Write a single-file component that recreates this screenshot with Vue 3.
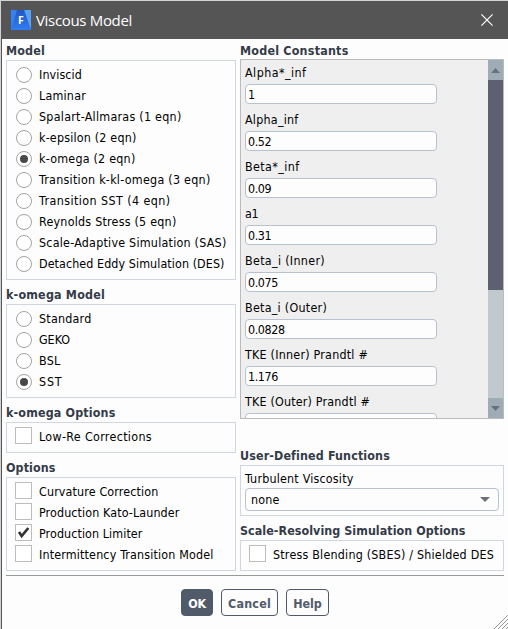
<script setup>
import { ref } from 'vue'

// Spreads a label's characters so that it takes up the given width in pixels.
const vFit = {
  mounted(el, { value }) {
    if (!value) return
    const range = document.createRange()
    range.selectNodeContents(el)
    const natural = range.getBoundingClientRect().width
    el.style.letterSpacing = `${(value - natural) / el.textContent.length}px`
  },
}

const models = [
  { label: 'Inviscid', width: 43 },
  { label: 'Laminar', width: 47 },
  { label: 'Spalart-Allmaras (1 eqn)', width: 142.5 },
  { label: 'k-epsilon (2 eqn)', width: 97.5 },
  { label: 'k-omega (2 eqn)', width: 96.5 },
  { label: 'Transition k-kl-omega (3 eqn)', width: 171.5 },
  { label: 'Transition SST (4 eqn)', width: 131.5 },
  { label: 'Reynolds Stress (5 eqn)', width: 137.5 },
  { label: 'Scale-Adaptive Simulation (SAS)', width: 187.5 },
  { label: 'Detached Eddy Simulation (DES)', width: 185.5 },
]
const model = ref('k-omega (2 eqn)')
const variants = [
  { label: 'Standard', width: 52.5 },
  { label: 'GEKO', width: 31 },
  { label: 'BSL', width: 21.5 },
  { label: 'SST', width: 23.5 },
]
const variant = ref('SST')
const lowRe = ref(false)
const sbes = ref(false)
const options = ref([
  { label: 'Curvature Correction', width: 119.5, on: false },
  { label: 'Production Kato-Launder', width: 140.5, on: false },
  { label: 'Production Limiter', width: 103.5, on: true },
  { label: 'Intermittency Transition Model', width: 174.5, on: false },
])
const constants = ref([
  { label: 'Alpha*_inf', width: 61.5, value: '1' },
  { label: 'Alpha_inf', width: 53.5, value: '0.52' },
  { label: 'Beta*_inf', width: 54.5, value: '0.09' },
  { label: 'a1', width: 13.5, value: '0.31' },
  { label: 'Beta_i (Inner)', width: 80, value: '0.075' },
  { label: 'Beta_i (Outer)', width: 82, value: '0.0828' },
  { label: 'TKE (Inner) Prandtl #', width: 123, value: '1.176' },
  { label: 'TKE (Outer) Prandtl #', width: 125, value: '1' },
])
</script>

<template>
  <div class="window">
    <header class="titlebar">
      <svg class="logo" width="20" height="20" viewBox="0 0 20 20">
        <defs>
          <linearGradient id="logoFill" x1="0" y1="0" x2="0" y2="1">
            <stop offset="0" stop-color="#2456bd" />
            <stop offset="1" stop-color="#2f7df3" />
          </linearGradient>
        </defs>
        <rect width="20" height="20" fill="#3482f2" />
        <path d="M13 0H20V20Z" fill="#58a3fa" />
        <path d="M6 0H13L20 20H0Z" fill="url(#logoFill)" />
        <text x="10" y="14" text-anchor="middle" class="logo-letter">F</text>
      </svg>
      <h1><span v-fit="96">Viscous Model</span></h1>
      <svg class="close" width="12" height="12" viewBox="0 0 12 12">
        <path d="M.4 .4 11.6 11.6M11.6 .4 .4 11.6" stroke="#fff" stroke-width="1.2" />
      </svg>
    </header>

    <main class="columns">
      <div class="left">
        <section>
          <h2><span v-fit="39">Model</span></h2>
          <div class="box">
            <label v-for="m in models" :key="m.label" class="row" @click="model = m.label">
              <span class="radio" :class="{ on: model === m.label }"></span><span v-fit="m.width">{{ m.label }}</span>
            </label>
          </div>
        </section>
        <section>
          <h2><span v-fit="99">k-omega Model</span></h2>
          <div class="box">
            <label v-for="v in variants" :key="v.label" class="row" @click="variant = v.label">
              <span class="radio" :class="{ on: variant === v.label }"></span><span v-fit="v.width">{{ v.label }}</span>
            </label>
          </div>
        </section>
        <section>
          <h2><span v-fit="109.5">k-omega Options</span></h2>
          <div class="box checks">
            <label class="row" @click="lowRe = !lowRe">
              <span class="check"><svg v-if="lowRe" viewBox="0 0 15 15"><path d="M3 7 5.7 11 12.3 3" /></svg></span><span v-fit="113">Low-Re Corrections</span>
            </label>
          </div>
        </section>
        <section>
          <h2><span v-fit="49.5">Options</span></h2>
          <div class="box checks">
            <label v-for="o in options" :key="o.label" class="row" @click="o.on = !o.on">
              <span class="check"><svg v-if="o.on" viewBox="0 0 15 15"><path d="M3 7 5.7 11 12.3 3" /></svg></span><span v-fit="o.width">{{ o.label }}</span>
            </label>
          </div>
        </section>
      </div>

      <div class="right">
        <section class="constants">
          <h2><span v-fit="108.5">Model Constants</span></h2>
          <div class="scroller">
            <div class="fields">
              <label v-for="c in constants" :key="c.label" class="field">
                <span v-fit="c.width">{{ c.label }}</span>
                <input v-model="c.value" type="text">
              </label>
            </div>
            <div class="scrollbar">
              <div class="arrow"><svg width="9" height="5" viewBox="0 0 9 5"><path d="M4.5 0 9 5H0Z" /></svg></div>
              <div class="thumb"></div>
              <div class="track"></div>
              <div class="arrow"><svg width="9" height="5" viewBox="0 0 9 5"><path d="M0 0H9L4.5 5Z" /></svg></div>
            </div>
          </div>
        </section>
        <section class="udf">
          <h2><span v-fit="149.5">User-Defined Functions</span></h2>
          <div class="box">
            <div class="caption"><span v-fit="108.5">Turbulent Viscosity</span></div>
            <div class="select">
              <span v-fit="28.5">none</span>
              <svg width="10" height="5" viewBox="0 0 10 5"><path d="M0 0H10L5 5Z" /></svg>
            </div>
          </div>
        </section>
        <section>
          <h2><span v-fit="225.5">Scale-Resolving Simulation Options</span></h2>
          <div class="box checks">
            <label class="row" @click="sbes = !sbes">
              <span class="check"><svg v-if="sbes" viewBox="0 0 15 15"><path d="M3 7 5.7 11 12.3 3" /></svg></span><span v-fit="221">Stress Blending (SBES) / Shielded DES</span>
            </label>
          </div>
        </section>
      </div>
    </main>

    <footer>
      <button class="primary"><span v-fit="17.5">OK</span></button>
      <button class="cancel"><span v-fit="43">Cancel</span></button>
      <button class="help"><span v-fit="28.5">Help</span></button>
    </footer>
    <svg class="grip" width="15" height="14" viewBox="0 0 15 14">
      <path d="M1 14 15 0M5 14 15 4M9 14 15 8M13 14 15 12" stroke="#999" />
    </svg>
  </div>
</template>

<style>
body { background: #d0d3d6; overflow: hidden; }
#app { display: flow-root; }
</style>

<style scoped>
* { box-sizing: border-box; }
.window {
  position: relative;
  display: flex;
  flex-direction: column;
  width: 507px;
  height: 628px;
  margin: 1px 0 0 1px;
  border-left: 1px solid #555;
  background: #fdfdfd;
  color: #000;
  font: 12.4px/21px "DejaVu Sans Condensed", "DejaVu Sans", sans-serif;
  font-stretch: condensed;
}
.titlebar {
  display: flex;
  flex: none;
  align-items: center;
  height: 38px;
  padding: 0 15px 0 9px;
  background: #555;
}
h1 {
  flex: 1;
  margin: -1px 0 0 5px;
  color: #fff;
  font: 15px/20px "Open Sans", "Noto Sans", sans-serif;
}
.logo-letter { fill: #fff; font: bold 10.5px "Open Sans", sans-serif; }
.columns { display: flex; flex: none; gap: 4px; height: 532px; padding: 4px 4px 0; }
.left { width: 230px; }
.right { width: 264px; }
h2 {
  height: 17px;
  margin: 0;
  color: #343b48;
  font-weight: bold;
  font-size: 12.4px;
  line-height: 15px;
  white-space: nowrap;
}
section + section { margin-top: 7px; }
.box { padding: 4px 8px 4px; border: 1px solid #d0d7e3; }
.box.checks { padding: 3px 8px 5px; }
.row { display: flex; align-items: center; height: 21px; white-space: nowrap; }
.radio {
  display: grid;
  place-items: center;
  width: 16px;
  height: 16px;
  margin: -1px 7px 0 1px;
  border: 1px solid #a3a3a3;
  border-radius: 50%;
  background: #fff;
}
.radio + span { margin-top: -2px; }
.radio.on::after { content: ""; width: 8px; height: 8px; border-radius: 50%; background: #48484a; }
.check {
  width: 17px;
  height: 17px;
  margin: -2px 7px 0 0;
  border: 1px solid #bdbdbd;
  background: #fff;
}
.check svg { display: block; width: 15px; height: 15px; }
.check path { fill: none; stroke: #333; stroke-width: 2.7; }
.constants h2 { height: 16px; }
.scroller {
  display: flex;
  height: 360px;
  border: 1px solid #bbb;
  background: #efefef;
  overflow: hidden;
}
.fields { flex: 1; padding: 3px 4px 0; }
.field { display: block; height: 47px; white-space: nowrap; }
.field span { display: block; height: 21px; line-height: 20px; }
.field input {
  display: block;
  width: 192px;
  height: 20px;
  padding: 1px 2px 0;
  border: 1px solid #b8c1d0;
  border-radius: 4px;
  background: #fdfdfd;
  color: #000;
  font: inherit;
  font-size: 12.4px;
  letter-spacing: -.4px;
  line-height: 17px;
}
.scrollbar { display: flex; flex-direction: column; width: 15px; }
.arrow { display: grid; place-items: center; height: 20px; background: #9eadb5; }
.arrow path { fill: #68717c; }
.thumb { height: 210px; background: #5c6070; }
.track { flex: 1; background: #c1c9cf; }
.right .udf { margin-top: 29px; }
.udf .box { height: 51px; padding: 3px 4px; }
.caption { height: 19px; line-height: 20px; }
.select {
  display: flex;
  align-items: center;
  justify-content: space-between;
  height: 23px;
  padding: 0 8px 0 5px;
  border: 1px solid #b8c1d0;
  border-radius: 4px;
}
.select path { fill: #6b7078; }
footer {
  display: flex;
  flex: none;
  gap: 8px;
  margin: 4px 4px 0;
  padding: 13px 0 0 175px;
  border-top: 1px solid #999;
}
button {
  height: 27px;
  padding: 2px 0 0;
  border: 1px solid #515a69;
  border-radius: 4px;
  background: #fdfdfd;
  color: #515a69;
  font: inherit;
  font-weight: bold;
}
.primary { width: 32px; background: #515a69; color: #fff; }
.cancel { width: 57px; }
.help { width: 43px; }
.grip { position: absolute; right: 0; bottom: 0; }
</style>
